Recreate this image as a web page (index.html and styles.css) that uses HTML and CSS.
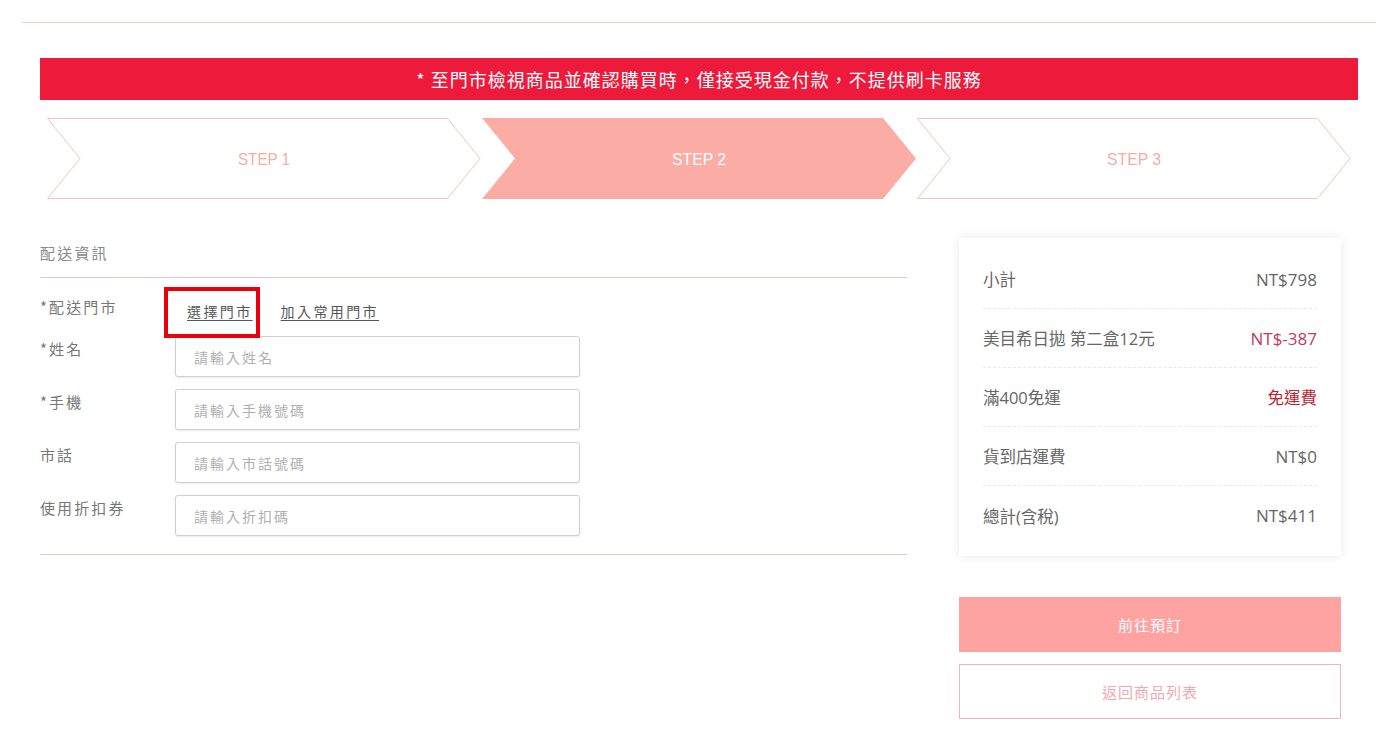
FILE: index.html
```html
<!DOCTYPE html>
<html lang="zh-Hant">
<head>
<meta charset="utf-8">
<title>配送資訊</title>
<link rel="stylesheet" href="styles.css">
</head>
<body>
<div class="topline"></div>
<div class="page">
  <div class="banner">* 至門市檢視商品並確認購買時，僅接受現金付款，不提供刷卡服務</div>
  <div class="steps">
    <svg class="step" viewBox="0 0 434 81" width="434" height="81">
      <polygon class="outline" points="0.5,0.5 400.5,0.5 433,40.5 400.5,80.5 0.5,80.5 33,40.5"/>
      <text x="191" y="46.5" textLength="52" lengthAdjust="spacingAndGlyphs" class="steptxt">STEP 1</text>
    </svg>
    <svg class="step" viewBox="0 0 434 81" width="434" height="81">
      <polygon class="filled" points="0,0 401,0 434,40.5 401,81 0,81 33,40.5"/>
      <text x="190" y="46.5" textLength="54" lengthAdjust="spacingAndGlyphs" class="steptxt on">STEP 2</text>
    </svg>
    <svg class="step" viewBox="0 0 434 81" width="434" height="81">
      <polygon class="outline" points="0.5,0.5 400.5,0.5 433,40.5 400.5,80.5 0.5,80.5 33,40.5"/>
      <text x="190" y="46.5" textLength="54" lengthAdjust="spacingAndGlyphs" class="steptxt">STEP 3</text>
    </svg>
  </div>
  <div class="main">
    <div class="left">
      <div class="sechead">配送資訊</div>
      <div class="form">
        <div class="row storerow">
          <div class="label">*配送門市</div>
          <div class="links">
            <a class="lnk pick" href="#">選擇門市<span class="mark"></span></a>
            <a class="lnk" href="#">加入常用門市</a>
          </div>
        </div>
        <div class="row">
          <div class="label">*姓名</div>
          <input class="inp" type="text" placeholder="請輸入姓名">
        </div>
        <div class="row">
          <div class="label">*手機</div>
          <input class="inp" type="text" placeholder="請輸入手機號碼">
        </div>
        <div class="row">
          <div class="label">市話</div>
          <input class="inp" type="text" placeholder="請輸入市話號碼">
        </div>
        <div class="row">
          <div class="label">使用折扣券</div>
          <input class="inp" type="text" placeholder="請輸入折扣碼">
        </div>
      </div>
    </div>
    <div class="right">
      <div class="card">
        <div class="crow"><span>小計</span><span>NT$798</span></div>
        <div class="crow"><span>美目希日拋 第二盒12元</span><span class="red1">NT$-387</span></div>
        <div class="crow"><span>滿400免運</span><span class="red2">免運費</span></div>
        <div class="crow"><span>貨到店運費</span><span>NT$0</span></div>
        <div class="crow last"><span>總計(含稅)</span><span>NT$411</span></div>
      </div>
      <a class="btn primary" href="#">前往預訂</a>
      <a class="btn ghost" href="#">返回商品列表</a>
    </div>
  </div>
</div>
</body>
</html>
```

FILE: styles.css
```css
* { box-sizing: border-box; }
html, body { margin: 0; padding: 0; background: #fff; }
body {
  font-family: "Noto Sans CJK TC", "Noto Sans", sans-serif;
  color: #666;
  width: 1392px;
  height: 755px;
  overflow: hidden;
}
.topline {
  margin: 22px 16px 0 22px;
  height: 1px;
  background: #f2cccc;
}
.page {
  margin-left: 40px;
  width: 1318px;
}
.banner {
  margin-top: 35px;
  height: 42px;
  background: #ed1a3b;
  color: #fff;
  font-size: 18px;
  letter-spacing: 1px;
  line-height: 42px;
  text-align: center;
}
.steps {
  margin-top: 18px;
  display: flex;
  gap: 1px;
  padding-left: 7px;
  height: 81px;
}
.step { display: block; flex: none; }
.outline { fill: #fff; stroke: #f2c3bf; stroke-width: 1; }
.filled { fill: #fbaca4; }
.steptxt {
  font-family: "Liberation Sans", sans-serif;
  font-size: 17px;
  fill: #f6aca6;
}
.steptxt.on { fill: #fff; }
.main {
  margin-top: 39px;
  display: flex;
  gap: 52px;
}
.left { width: 867px; }
.sechead {
  font-size: 15px;
  letter-spacing: 2.2px;
  color: #888;
  line-height: 30px;
  padding-top: 0;
  padding-bottom: 9px;
  border-bottom: 1px solid #f0c3c3;
}
.form {
  border-bottom: 1px solid #f0c3c3;
  padding-bottom: 18px;
}
.row {
  display: flex;
  align-items: flex-start;
  margin-top: 12px;
}
.row.storerow { margin-top: 0; padding-top: 18px; height: 58px; }
.storerow + .row { margin-top: 0; }
.label {
  width: 135px;
  flex: none;
  font-size: 15px;
  letter-spacing: 2.1px;
  color: #777;
  line-height: 22px;
  padding-top: 2px;
}
.storerow .label { padding-top: 0; }
.links {
  display: flex;
  gap: 28px;
  padding-left: 12px;
  padding-top: 4px;
}
.lnk {
  position: relative;
  font-size: 14px;
  letter-spacing: 2.4px;
  color: #555;
  line-height: 22px;
  text-decoration: underline;
  text-underline-offset: 3px;
}
.mark {
  position: absolute;
  left: -23px;
  top: -13px;
  width: 96px;
  height: 51px;
  border: 4px solid #e8000b;
}
.inp {
  width: 405px;
  height: 41px;
  border: 1px solid #cfcfcf;
  border-radius: 3px;
  box-shadow: 0 1px 2px rgba(0,0,0,0.08);
  padding: 0 18px;
  font-family: "Noto Sans CJK TC", "Noto Sans", sans-serif;
  font-size: 14px;
  letter-spacing: 2px;
  color: #555;
  outline: none;
}
.inp::placeholder { color: #b0b0b0; }
.right { width: 382px; }
.card {
  background: #fff;
  box-shadow: 0 0 10px rgba(0,0,0,0.09);
  padding: 12px 24px 11px;
  font-family: "Open Sans", "Noto Sans CJK TC", sans-serif;
}
.crow {
  display: flex;
  justify-content: space-between;
  align-items: center;
  height: 59px;
  font-size: 17px;
  color: #666;
  border-bottom: 1px dashed #e8e8e8;
}
.crow span { font-family: "Open Sans", "Noto Sans CJK TC", sans-serif; }
.crow span:first-child { font-size: 16.5px; }
.crow .red2 { font-size: 16.5px; }
.crow.last { border-bottom: none; }
.red1 { color: #c8375c; }
.red2 { color: #c3232f; }
.btn {
  display: flex;
  align-items: center;
  justify-content: center;
  height: 55px;
  font-size: 15px;
  letter-spacing: 1px;
  text-decoration: none;
}
.btn.primary {
  margin-top: 41px;
  background: #fea2a2;
  color: #fff;
}
.btn.ghost {
  margin-top: 12px;
  border: 1px solid #f2b3bb;
  color: #f0a8b4;
}
```
